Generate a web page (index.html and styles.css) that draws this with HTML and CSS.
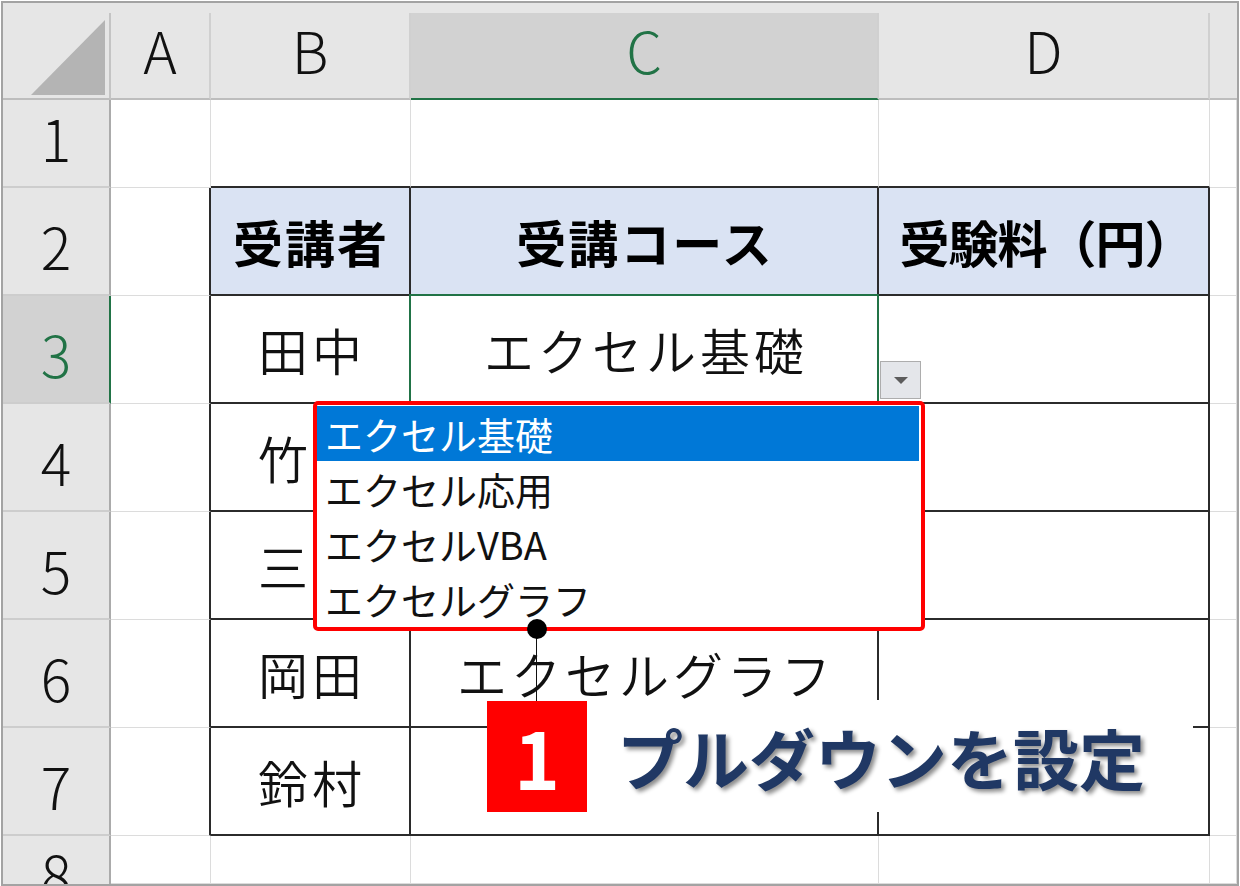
FILE: index.html
```html
<!DOCTYPE html>
<html lang="ja">
<head>
<meta charset="utf-8">
<title>プルダウンを設定</title>
<link rel="stylesheet" href="styles.css">
</head>
<body>
<div class="frame">
  <div class="band"></div>
  <div class="sheet">
    <div class="c h corner"><svg class="tri" width="74" height="75" viewBox="0 0 74 75"><polygon points="0,75 74,0 74,75" fill="#b4b4b4"/></svg></div>
    <div class="c h">A</div>
    <div class="c h">B</div>
    <div class="c h sel">C</div>
    <div class="c h">D</div>
    <div class="c h last"></div>

    <div class="c rh">1</div>
    <div class="c"></div>
    <div class="c tt"></div>
    <div class="c tt"></div>
    <div class="c tt"></div>
    <div class="c"></div>

    <div class="c rh">2</div>
    <div class="c tl"></div>
    <div class="c t th">受講者</div>
    <div class="c t th">受講コース</div>
    <div class="c t th fee">受験料（円）</div>
    <div class="c"></div>

    <div class="c rh sel">3</div>
    <div class="c tl"></div>
    <div class="c t td">田中</div>
    <div class="c t td cur">エクセル基礎</div>
    <div class="c t"></div>
    <div class="c"></div>

    <div class="c rh">4</div>
    <div class="c tl"></div>
    <div class="c t td">竹内</div>
    <div class="c t"></div>
    <div class="c t"></div>
    <div class="c"></div>

    <div class="c rh">5</div>
    <div class="c tl"></div>
    <div class="c t td">三浦</div>
    <div class="c t"></div>
    <div class="c t"></div>
    <div class="c"></div>

    <div class="c rh">6</div>
    <div class="c tl"></div>
    <div class="c t td">岡田</div>
    <div class="c t td">エクセルグラフ</div>
    <div class="c t"></div>
    <div class="c"></div>

    <div class="c rh">7</div>
    <div class="c tl"></div>
    <div class="c t td">鈴村</div>
    <div class="c t"></div>
    <div class="c t"></div>
    <div class="c"></div>

    <div class="c rh r8">8</div>
    <div class="c"></div>
    <div class="c"></div>
    <div class="c"></div>
    <div class="c"></div>
    <div class="c"></div>
  </div>

  <div class="ddbtn"><span class="arrow"></span></div>

  <ul class="dd">
    <li class="on">エクセル基礎</li>
    <li>エクセル応用</li>
    <li>エクセルVBA</li>
    <li>エクセルグラフ</li>
  </ul>

  <div class="stem"></div>
  <div class="dot"></div>

  <div class="callout">
    <div class="num">1</div>
    <div class="label">プルダウンを設定</div>
  </div>
</div>
</body>
</html>
```

FILE: styles.css
```css
html, body {
  margin: 0;
  padding: 0;
  background: #ffffff;
}

body {
  font-family: "Noto Sans CJK JP", "Noto Sans", sans-serif;
  color: #000;
}

.frame {
  position: relative;
  margin: 1px 0 0 1px;
  width: 1234px;
  height: 881px;
  border: 2px solid #a3a3a3;
  overflow: hidden;
  background: #ffffff;
}

.band {
  height: 10px;
  background: #e6e6e6;
}

.sheet {
  display: grid;
  grid-template-columns: 108px 100px 200px 468px 331px 27px;
  grid-template-rows: 87px 88px repeat(6, 108px) 48px;
}

.c {
  box-sizing: border-box;
  border-right: 1px solid #dcdcdc;
  border-bottom: 1px solid #dcdcdc;
}

/* column headers */
.h {
  background: #e6e6e6;
  border-right: 2px solid #d0d0d0;
  border-bottom: 2px solid #bdbdbd;
  display: flex;
  align-items: flex-end;
  justify-content: center;
  padding-bottom: 20px;
  font-size: 57px;
  font-weight: 300;
  line-height: 1;
  color: #111;
}

.h.sel {
  background: #d2d2d2;
  color: #217346;
  border-bottom: 2px solid #217346;
}

.h.last {
  border-right: none;
}

.corner {
  border-right: 2px solid #c4c4c4;
  justify-content: flex-end;
  padding: 0 4px 3px 0;
}

.tri {
  display: block;
}

/* row headers */
.rh {
  background: #e6e6e6;
  border-right: 2px solid #ababab;
  border-bottom: 2px solid #cdcdcd;
  display: flex;
  align-items: flex-end;
  justify-content: center;
  padding-bottom: 20px;
  font-size: 57px;
  font-weight: 300;
  line-height: 1;
  color: #111;
}

.rh.sel {
  background: #d2d2d2;
  color: #217346;
  border-right: 2px solid #217346;
}

.rh.r8 {
  align-items: flex-start;
  padding: 9px 0 0 0;
  border-bottom: none;
}

/* data table */
.tt {
  border-bottom: 2px solid #2b2b2b;
}

.tl {
  border-right: 2px solid #2b2b2b;
}

.t {
  border-right: 2px solid #2b2b2b;
  border-bottom: 2px solid #2b2b2b;
}

.th {
  background: #dae3f3;
  display: flex;
  align-items: center;
  justify-content: center;
  font-size: 50px;
  font-weight: 700;
  letter-spacing: 2px;
  padding-left: 2px;
  line-height: 1;
}

.th.fee {
  letter-spacing: -1px;
  padding-left: 6px;
}

.td {
  display: flex;
  align-items: center;
  justify-content: center;
  font-size: 50px;
  font-weight: 350;
  letter-spacing: 4px;
  padding-left: 4px;
  line-height: 1;
  color: #111;
}

.cur {
  position: relative;
}

.cur::after {
  content: "";
  position: absolute;
  left: -2px;
  top: -2px;
  right: -2px;
  bottom: -2px;
  border: 2px solid #217346;
}

/* dropdown button */
.ddbtn {
  position: absolute;
  left: 877px;
  top: 358px;
  width: 41px;
  height: 38px;
  box-sizing: border-box;
  border: 1px solid #adadad;
  background: #e4e6ea;
  display: flex;
  align-items: center;
  justify-content: center;
}

.arrow {
  width: 0;
  height: 0;
  border-left: 7px solid transparent;
  border-right: 7px solid transparent;
  border-top: 7px solid #5c5c5c;
}

/* dropdown list */
.dd {
  position: absolute;
  left: 310px;
  top: 398px;
  width: 612px;
  height: 230px;
  box-sizing: border-box;
  margin: 0;
  padding: 1px 2px 1px 0;
  list-style: none;
  border: 4px solid #ff0000;
  border-radius: 5px;
  background: #ffffff;
  z-index: 2;
}

.dd li {
  height: 55px;
  padding-left: 8px;
  display: flex;
  align-items: center;
  font-size: 38px;
  line-height: 1;
  color: #111;
}

.dd li.on {
  background: #0078d7;
  color: #ffffff;
}

/* pointer */
.stem {
  position: absolute;
  left: 533px;
  top: 625px;
  width: 1px;
  height: 73px;
  background: #111;
  z-index: 3;
}

.dot {
  position: absolute;
  left: 524px;
  top: 616px;
  width: 20px;
  height: 20px;
  border-radius: 50%;
  background: #000;
  z-index: 3;
}

/* callout */
.callout {
  position: absolute;
  left: 484px;
  top: 697px;
  width: 706px;
  height: 112px;
  background: #ffffff;
  display: flex;
  align-items: center;
  z-index: 2;
}

.num {
  width: 100px;
  height: 111px;
  background: #ff0000;
  color: #ffffff;
  display: flex;
  align-items: center;
  justify-content: center;
  font-size: 78px;
  font-weight: 700;
  line-height: 1;
}

.label {
  margin-left: 30px;
  font-size: 66px;
  font-weight: 700;
  line-height: 1;
  letter-spacing: 0;
  color: #203864;
  text-shadow: 3px 3px 4px rgba(0, 0, 0, 0.45);
}
```
